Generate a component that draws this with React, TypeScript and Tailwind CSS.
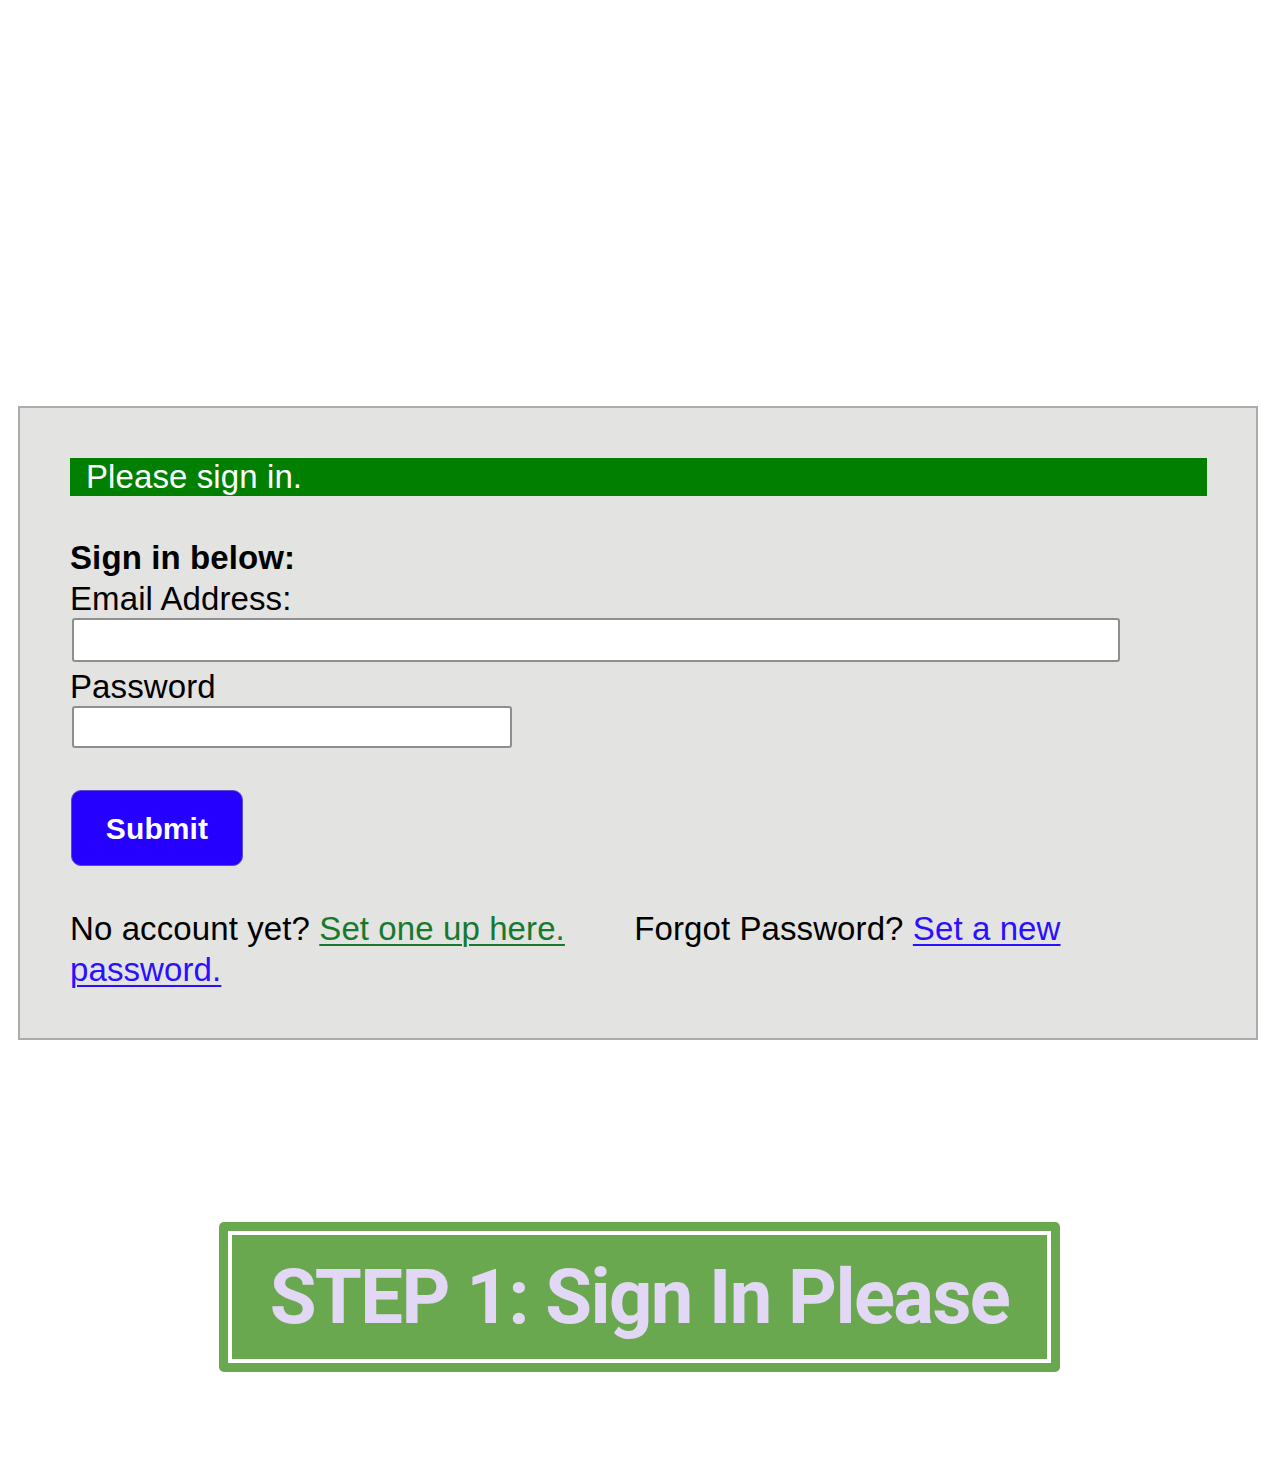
import React from "react";

export default function App() {
  return (
    <div className="w-[1280px] h-[1465px] bg-white" style={{ fontFamily: '"Liberation Sans", Arial, sans-serif' }}>
      <div className="h-[406px]" />
      <div className="ml-[18px] w-[1240px] border-2 border-[#acacac] bg-[#e3e3e1] pt-[50px] pb-[48px] pl-[50px] pr-[49px] text-[33px] leading-[41px] text-black tracking-[0.1px]">
        <div className="h-[38px] bg-[#007f00] pl-[16px] text-white leading-[38px]">Please sign in.</div>
        <div className="mt-[41px] font-bold">Sign in below:</div>
        <div>Email Address:</div>
        <input
          type="text"
          className="block ml-[2px] -mt-[1px] w-[1048px] h-[44px] bg-white border-2 border-[#8e8e8e] rounded-[3px]"
        />
        <div className="mt-[4px]">Password</div>
        <input
          type="password"
          className="block ml-[2px] -mt-[1px] w-[440px] h-[42px] bg-white border-2 border-[#8e8e8e] rounded-[3px]"
        />
        <button className="block mt-[42px] ml-[1px] w-[172px] h-[76px] rounded-[10px] bg-[#2500ff] text-white font-bold text-[30px] border border-[#5a4ad0]">
          Submit
        </button>
        <div className="mt-[42px]">
          No account yet?{" "}
          <a href="#" className="text-[#17782e] underline decoration-2 underline-offset-[4px]">Set one up here.</a>
          <span className="inline-block w-[60px]" />{" "}
          Forgot Password?{" "}
          <a href="#" className="text-[#2a10ff] underline decoration-2 underline-offset-[4px]">Set a new password.</a>
        </div>
      </div>
      <div className="mt-[182px] ml-[219px] w-[841px] h-[150px] rounded-[5px] bg-[#6aa84f] p-[9px]">
        <div className="h-full w-full border-[4px] border-white flex items-center justify-center">
          <span
            className="text-[#e2d7f4] font-bold text-[76px] leading-none tracking-[-1.6px]"
            style={{ fontFamily: 'Roboto, "Liberation Sans", sans-serif' }}
          >
            STEP 1: Sign In Please
          </span>
        </div>
      </div>
    </div>
  );
}
